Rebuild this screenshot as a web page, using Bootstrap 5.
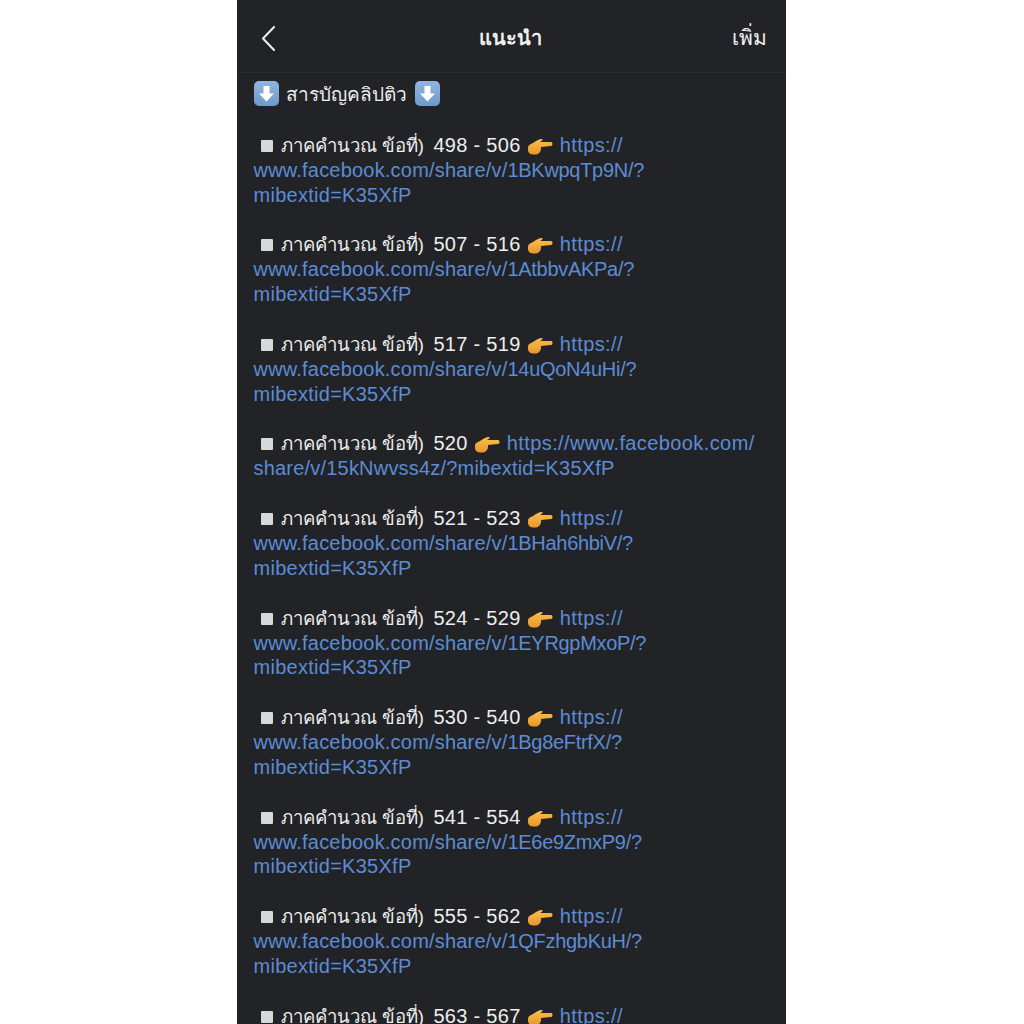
<!DOCTYPE html>
<html lang="th">
<head>
  <meta charset="UTF-8">
  <meta name="viewport" content="width=device-width, initial-scale=1.0">
  <title>แนะนำ</title>
  <link rel="stylesheet" href="https://cdn.jsdelivr.net/npm/bootstrap@5.3.0/dist/css/bootstrap.min.css">
  <style>
    html, body { height: 1024px; overflow: hidden; background: #fff; }
    body { font-family: "Liberation Sans", "Noto Sans", sans-serif; }
    .phone { width: 549px; height: 1024px; overflow: hidden; background: #222327; color: #eeeeee; margin-right: 2px; }
    .topbar { height: 73px; padding: 4px 19px 0 25px; border-bottom: 1px solid #2b2c30; }
    .topbar-side { flex: 1 1 0; }
    .topbar-title { font-size: 20px; font-weight: 700; color: #f0f0f0; margin-right: 7px; }
    .topbar-more { font-size: 21px; color: #f0f0f0; }
    .feed { padding: 8px 17px 0; font-size: 20px; line-height: 24.85px; }
    .feed-head { margin-bottom: 26px; }
    .entry { margin-bottom: 25px; white-space: nowrap; }
    .entry a { color: #5c8cd4; text-decoration: none; }
    .th-head { font-size: 19px; line-height: 1; margin: 0 2px; }
    .th-text { font-size: 18.5px; line-height: 1; margin-right: 4px; }
    .nums { letter-spacing: .3px; }
    .sq { display: inline-block; width: 12px; height: 12px; background: #d8d8d8; border-radius: 1px; margin: 0 8px 0 7px; }
    .emo { display: inline-block; vertical-align: -5px; }
    .hand { vertical-align: -3px; margin: 0 1px; }
    .url-short { letter-spacing: .4px; }
    .url-host { letter-spacing: .2px; }
    .url-id { letter-spacing: -.3px; }
    .url-tail { letter-spacing: .27px; }
  </style>
</head>
<body>
  <svg width="0" height="0" class="position-absolute">
    <defs>
      <linearGradient id="handfill" x1="0" y1="0" x2="0" y2="1">
        <stop offset="0" stop-color="#fbc04a"/>
        <stop offset="1" stop-color="#e8962c"/>
      </linearGradient>
      <linearGradient id="boxfill" x1="0" y1="0" x2="0" y2="1">
        <stop offset="0" stop-color="#8fb6de"/>
        <stop offset="1" stop-color="#6f9ac8"/>
      </linearGradient>
    </defs>
    <symbol id="down" viewBox="0 0 25 25">
      <rect width="25" height="25" rx="5" fill="url(#boxfill)"/>
      <path d="M9.500 5h6v7.500H20l-7.500 8-7.500-8h4.500z" fill="#fff"/>
    </symbol>
    <symbol id="hand" viewBox="0 0 26 16">
      <path d="M1 9C1 6 4 5 6 4 9 2 12 0 15 0c1.500.5 0 2-2 3h11c2 .5 2 3.500 0 4l-10 1c.5 3-1 7-5 7.500H6C2 15.500.5 12 1 9z" fill="url(#handfill)"/>
    </symbol>
  </svg>
  <div class="d-flex justify-content-center">
    <div class="phone">
      <div class="topbar d-flex align-items-center">
        <div class="topbar-side">
          <svg class="d-block" width="13" height="25" viewBox="0 0 13 25" fill="none" stroke="#f0f0f0" stroke-width="2" stroke-linecap="round" stroke-linejoin="round"><path d="M12 1 1 12.500 12 24"/></svg>
        </div>
        <span class="topbar-title">แนะนำ</span>
        <div class="topbar-side text-end"><span class="topbar-more">เพิ่ม</span></div>
      </div>
      <div class="feed">
        <div class="feed-head"><svg class="emo" width="25" height="25"><use href="#down"/></svg> <span class="th-head">สารบัญคลิปติว</span> <svg class="emo" width="25" height="25"><use href="#down"/></svg></div>
        <div class="entry"><span class="sq"></span><span class="th-text">ภาคคำนวณ ข้อที่)</span> <span class="nums">498 - 506</span> <svg class="emo hand" width="26" height="16"><use href="#hand"/></svg> <a href="#"><span class="url-short">https://</span><br><span class="url-host">www.facebook.com/share/v/</span><span class="url-id">1BKwpqTp9N/?</span><br><span class="url-tail">mibextid=K35XfP</span></a></div>
        <div class="entry"><span class="sq"></span><span class="th-text">ภาคคำนวณ ข้อที่)</span> <span class="nums">507 - 516</span> <svg class="emo hand" width="26" height="16"><use href="#hand"/></svg> <a href="#"><span class="url-short">https://</span><br><span class="url-host">www.facebook.com/share/v/</span><span class="url-id">1AtbbvAKPa/?</span><br><span class="url-tail">mibextid=K35XfP</span></a></div>
        <div class="entry"><span class="sq"></span><span class="th-text">ภาคคำนวณ ข้อที่)</span> <span class="nums">517 - 519</span> <svg class="emo hand" width="26" height="16"><use href="#hand"/></svg> <a href="#"><span class="url-short">https://</span><br><span class="url-host">www.facebook.com/share/v/</span><span class="url-id">14uQoN4uHi/?</span><br><span class="url-tail">mibextid=K35XfP</span></a></div>
        <div class="entry"><span class="sq"></span><span class="th-text">ภาคคำนวณ ข้อที่)</span> <span class="nums">520</span> <svg class="emo hand" width="26" height="16"><use href="#hand"/></svg> <a href="#"><span class="url-short">https://www.facebook.com/</span><br><span class="url-host">share/v/15kNwvss4z/?mibextid=K35XfP</span></a></div>
        <div class="entry"><span class="sq"></span><span class="th-text">ภาคคำนวณ ข้อที่)</span> <span class="nums">521 - 523</span> <svg class="emo hand" width="26" height="16"><use href="#hand"/></svg> <a href="#"><span class="url-short">https://</span><br><span class="url-host">www.facebook.com/share/v/</span><span class="url-id">1BHah6hbiV/?</span><br><span class="url-tail">mibextid=K35XfP</span></a></div>
        <div class="entry"><span class="sq"></span><span class="th-text">ภาคคำนวณ ข้อที่)</span> <span class="nums">524 - 529</span> <svg class="emo hand" width="26" height="16"><use href="#hand"/></svg> <a href="#"><span class="url-short">https://</span><br><span class="url-host">www.facebook.com/share/v/</span><span class="url-id">1EYRgpMxoP/?</span><br><span class="url-tail">mibextid=K35XfP</span></a></div>
        <div class="entry"><span class="sq"></span><span class="th-text">ภาคคำนวณ ข้อที่)</span> <span class="nums">530 - 540</span> <svg class="emo hand" width="26" height="16"><use href="#hand"/></svg> <a href="#"><span class="url-short">https://</span><br><span class="url-host">www.facebook.com/share/v/</span><span class="url-id">1Bg8eFtrfX/?</span><br><span class="url-tail">mibextid=K35XfP</span></a></div>
        <div class="entry"><span class="sq"></span><span class="th-text">ภาคคำนวณ ข้อที่)</span> <span class="nums">541 - 554</span> <svg class="emo hand" width="26" height="16"><use href="#hand"/></svg> <a href="#"><span class="url-short">https://</span><br><span class="url-host">www.facebook.com/share/v/</span><span class="url-id">1E6e9ZmxP9/?</span><br><span class="url-tail">mibextid=K35XfP</span></a></div>
        <div class="entry"><span class="sq"></span><span class="th-text">ภาคคำนวณ ข้อที่)</span> <span class="nums">555 - 562</span> <svg class="emo hand" width="26" height="16"><use href="#hand"/></svg> <a href="#"><span class="url-short">https://</span><br><span class="url-host">www.facebook.com/share/v/</span><span class="url-id">1QFzhgbKuH/?</span><br><span class="url-tail">mibextid=K35XfP</span></a></div>
        <div class="entry"><span class="sq"></span><span class="th-text">ภาคคำนวณ ข้อที่)</span> <span class="nums">563 - 567</span> <svg class="emo hand" width="26" height="16"><use href="#hand"/></svg> <a href="#"><span class="url-short">https://</span></a></div>
      </div>
    </div>
  </div>
  <script src="https://cdn.jsdelivr.net/npm/bootstrap@5.3.0/dist/js/bootstrap.bundle.min.js"></script>
</body>
</html>
